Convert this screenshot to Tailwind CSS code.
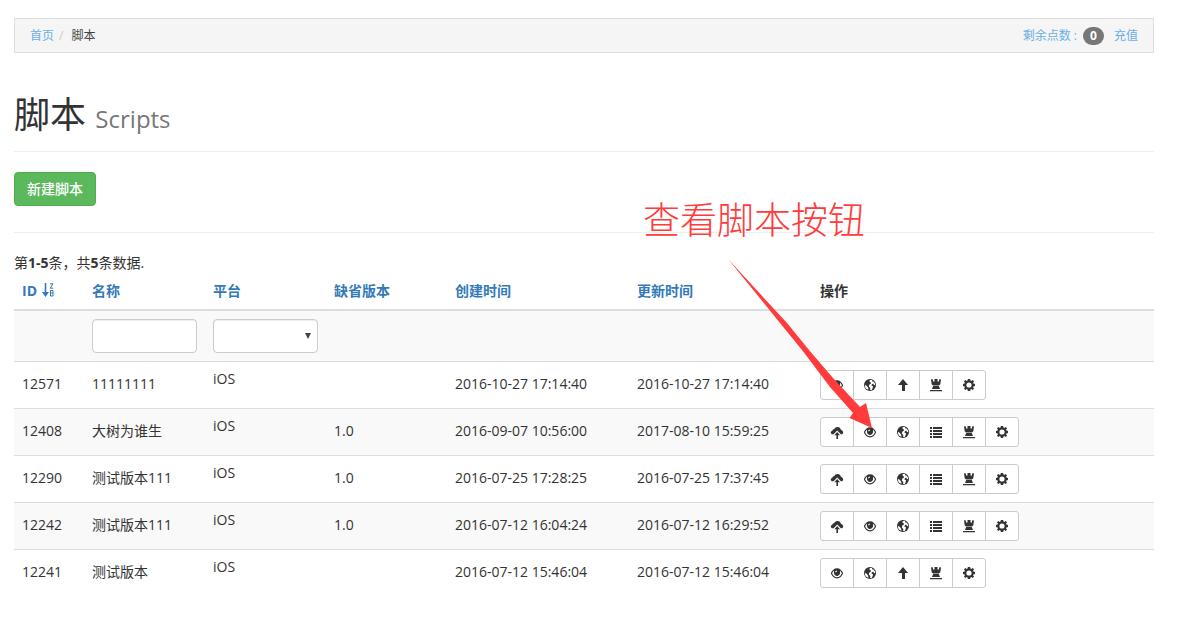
<!DOCTYPE html>
<html lang="zh-CN">
<head>
<meta charset="utf-8">
<meta name="viewport" content="width=device-width, initial-scale=1">
<title>脚本 Scripts</title>
<script src="https://cdn.jsdelivr.net/npm/@tailwindcss/browser@4"></script>
</head>
<body class="relative bg-white pt-[18px] pr-[27px] pb-8 pl-[14px] font-['Open_Sans','Noto_Sans_CJK_SC',sans-serif] text-sm leading-5 text-[#333]">

<svg class="hidden" aria-hidden="true">
  <symbol id="eye" viewBox="0 0 14 14">
    <path fill-rule="evenodd" d="M7 2.200C4.200 2.200 2 4.200.8 7.300 2 10.400 4.200 12.400 7 12.400S12 10.400 13.200 7.300C12 4.200 9.800 2.200 7 2.200ZM7 11.200C4.900 11.200 3.200 9.900 2.100 7.300 2.600 6.100 3.300 5.200 4 4.600 3.600 7.800 5 9.900 7 9.900S10.400 7.800 10 4.600C10.700 5.200 11.400 6.100 11.900 7.300 10.800 9.900 9.100 11.200 7 11.200Z"/>
    <path d="M7 3.700A2.900 2.900 0 1 0 9.900 6.600 2.900 2.900 0 0 0 7 3.700Z"/>
    <path d="M5 6.500A2.200 2.200 0 0 1 7 4.400L6.800 5.800Z" fill="#fff"/>
  </symbol>
  <symbol id="globe" viewBox="0 0 14 14">
    <circle cx="7" cy="7" r="6"/>
    <path fill="#fff" d="M7.200 1.900 9.200 2 8.900 3.200 10.400 3.400 11.900 5.300 12.200 7.200 10.900 6.900 10.300 5.600 8.900 6.300 8.400 7.500 10 8.300 9.700 9.900 8.700 12 7.100 12.100 7.300 9.900 5.900 8.500 6.200 6.700 7.900 5.600 8 4.500 6.800 4 6.400 2.700ZM1.900 6.800 3.600 7.800 5.200 9.700 5.400 11.800 3.500 11.100 2.200 9.200Z"/>
  </symbol>
  <symbol id="up" viewBox="0 0 14 14">
    <path d="M7 1 12 7H9V13H6V7H2Z"/>
  </symbol>
  <symbol id="tower" viewBox="0 0 14 14">
    <path d="M2 1.200 4 1.500V3.500H5.500V1H8.500V3.500H10V1.500L12 1.200 11.300 6.200 10 7.500H4L2.700 6.200ZM4.200 8H9.800L11 11H3ZM1 12H13V13.300H1Z"/>
  </symbol>
  <symbol id="cog" viewBox="0 0 14 14">
    <path fill-rule="evenodd" d="M5.900 1H8.100L8.500 2.600 9.300 2.900 10.700 2 12 3.300 11.100 4.700 11.400 5.500 13 5.900V8.100L11.400 8.500 11.100 9.300 12 10.700 10.700 12 9.300 11.100 8.500 11.400 8.100 13H5.900L5.500 11.400 4.700 11.100 3.300 12 2 10.700 2.900 9.300 2.600 8.500 1 8.100V5.900L2.600 5.500 2.900 4.700 2 3.300 3.300 2 4.700 2.900 5.500 2.600ZM7 4.400A2.600 2.600 0 1 0 7 9.600 2.600 2.600 0 0 0 7 4.400Z"/>
  </symbol>
  <symbol id="list" viewBox="0 0 14 14">
    <path d="M1 2H3V4H1ZM4 2H13V4H4ZM1 5H3V7H1ZM4 5H13V7H4ZM1 8H3V10H1ZM4 8H13V10H4ZM1 11H3V13H1ZM4 11H13V13H4Z"/>
  </symbol>
  <symbol id="upload" viewBox="0 0 14 14">
    <path d="M.8 8C.7 6.700 1.400 5.900 2.400 5.700 2.500 4.500 3.300 4 4.200 4.200 4.900 2.600 6.200 1.900 7.700 2 9.400 2.100 10.500 3.200 10.900 4.700 12.400 5.200 13.300 6.400 13.200 7.900L12.200 9.300H10.900L7.200 5.600 3.600 9.300H1.700Z"/>
    <path d="M7.200 7 10 10.200H8V14H6.400V10.200H4.400Z"/>
  </symbol>
</svg>

<nav aria-label="面包屑" class="flex h-[35px] items-center justify-between border border-[#ddd] bg-[#f5f5f5] px-[15px] text-xs">
  <ol class="flex items-center">
    <li><a href="#" class="text-[#6aaee6]">首页</a></li>
    <li class="flex"><span class="pr-2 pl-[5px] text-[#ccc]">/</span><span class="text-[#444]">脚本</span></li>
  </ol>
  <div class="flex items-center text-[#6aaee6]">
    <a href="#" class="flex items-center gap-[6px]">剩余点数 :<span class="flex h-[18px] w-[21px] items-center justify-center rounded-full bg-[#777] text-xs font-bold text-white">0</span></a>
    <a href="#" class="ml-[10px]">充值</a>
  </div>
</nav>

<header class="border-b border-[#eee] pt-[42px] pb-4">
  <h1 class="text-4xl leading-10 font-normal">脚本 <small class="text-2xl font-normal text-[#777]">Scripts</small></h1>
</header>

<button type="button" class="mt-5 block h-[34px] rounded border border-[#4cae4c] bg-[#5cb85c] px-3 font-medium text-white">新建脚本</button>
<hr class="mt-[26px] border-[#eee]">

<p class="mt-5">第<b>1-5</b>条，共<b>5</b>条数据.</p>

<table class="w-full table-fixed border-separate border-spacing-0 text-left">
  <colgroup>
    <col class="w-[70px]"><col class="w-[121px]"><col class="w-[121px]"><col class="w-[121px]"><col class="w-[182px]"><col class="w-[183px]"><col>
  </colgroup>
  <thead>
    <tr class="text-[#337ab7] *:border-b-2 *:border-[#ddd] *:p-2 *:font-bold">
      <th><a href="#" class="flex gap-[5px]">ID
        <svg class="mt-[2px] size-[14px]" viewBox="0 0 14 14" fill="none" stroke="currentColor" aria-hidden="true">
          <path stroke-width="1.600" d="M3.500 0V12"/><path fill="currentColor" stroke="none" d="M0 9H7L3.500 14Z"/>
          <path d="M8 .8H11L8.300 5.200H11.300M8.500 7.500H11V13H8.500ZM8.500 10H11"/>
        </svg></a></th>
      <th><a href="#">名称</a></th>
      <th><a href="#">平台</a></th>
      <th><a href="#">缺省版本</a></th>
      <th><a href="#">创建时间</a></th>
      <th><a href="#">更新时间</a></th>
      <th class="text-[#333]">操作</th>
    </tr>
    <tr class="bg-[#f9f9f9] *:p-2">
      <td></td>
      <td><input type="text" aria-label="名称" class="block h-[34px] w-full rounded border border-[#ccc] bg-white px-3 shadow-[inset_0_1px_1px_rgba(0,0,0,0.075)]"></td>
      <td><div class="relative"><select aria-label="平台" class="block h-[34px] w-full appearance-none rounded border border-[#ccc] bg-white px-3 shadow-[inset_0_1px_1px_rgba(0,0,0,0.075)]"><option></option><option>iOS</option></select>
        <svg class="pointer-events-none absolute top-[14px] right-[7px] h-[6px] w-[6px] fill-[#444]" viewBox="0 0 6 6" aria-hidden="true"><path d="M0 0H6L3 6Z"/></svg></div></td>
      <td></td><td></td><td></td><td></td>
    </tr>
  </thead>
  <tbody id="rows"></tbody>
</table>

<div class="pointer-events-none absolute top-[195px] left-[643px] text-[37px] leading-[50px] font-light whitespace-nowrap text-[#ff3b3b]">查看脚本按钮</div>
<svg class="pointer-events-none absolute top-[259px] left-[728px] h-[170px] w-[146px] fill-[#ff3b3b]" viewBox="0 0 146 170" aria-hidden="true">
  <path d="M0 0 59 64 81 91 105 119 132 148 138 144 144 169 121.500 159 125 154 102 128 74 91 52 64Z"/>
</svg>

<script>
const scripts = [
  ['12571', '11111111', '', '2016-10-27 17:14:40', '2016-10-27 17:14:40'],
  ['12408', '大树为谁生', '1.0', '2016-09-07 10:56:00', '2017-08-10 15:59:25'],
  ['12290', '测试版本111', '1.0', '2016-07-25 17:28:25', '2016-07-25 17:37:45'],
  ['12242', '测试版本111', '1.0', '2016-07-12 16:04:24', '2016-07-12 16:29:52'],
  ['12241', '测试版本', '', '2016-07-12 15:46:04', '2016-07-12 15:46:04'],
];
const labels = { upload: '上传', eye: '查看', globe: '发布', up: '上传版本', list: '版本列表', tower: '授权', cog: '设置' };
document.getElementById('rows').innerHTML = scripts.map(([id, name, version, created, updated], i) => {
  const icons = version ? ['upload', 'eye', 'globe', 'list', 'tower', 'cog'] : ['eye', 'globe', 'up', 'tower', 'cog'];
  const buttons = icons.map(n => `<button type="button" aria-label="${labels[n]}" class="-ml-px flex h-[30px] w-[34px] items-center justify-center border border-[#ccc] bg-white first:ml-0 first:rounded-l-[3px] last:rounded-r-[3px]"><svg class="size-[14px] fill-[#333]"><use href="#${n}"/></svg></button>`).join('');
  return `<tr class="${i % 2 ? 'bg-[#f9f9f9]' : 'bg-white'} *:h-[47px] *:border-t *:border-[#ddd] *:px-2 *:pb-[2px] *:align-middle">
    <td>${id}</td><td>${name}</td><td><div class="h-[30px]">iOS</div></td><td>${version}</td><td>${created}</td><td>${updated}</td>
    <td class="pt-[2px]"><div class="flex">${buttons}</div></td></tr>`;
}).join('');
</script>
</body>
</html>
